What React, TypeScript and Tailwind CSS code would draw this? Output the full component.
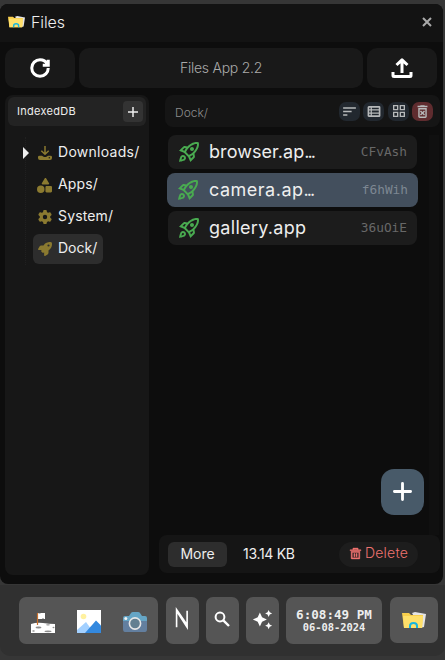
import React from "react";
import { FaShapes, FaRocket, FaGear } from "react-icons/fa6";
import { GrRefresh } from "react-icons/gr";
import { RiDeleteBin5Line } from "react-icons/ri";
import {
  MdAutoAwesome,
  MdOutlineDeleteForever,
  MdOutlineGridView,
  MdOutlineRocketLaunch,
  MdSort,
} from "react-icons/md";

function FolderIcon({ className }: { className: string }) {
  return (
    <svg viewBox="0 0 24 17" preserveAspectRatio="none" className={className}>
      <path d="M10 1l3-1 11 2-2 13-4 1z" fill="#e4e4e4" />
      <path d="M0 1h7l2 2h12l-1 13H2z" fill="#f9cf4c" />
      <path d="M1 4h20l-1 12H2z" fill="#ffe06a" />
      <path d="M8 16v-2c0-4 7-4 7 0v2" fill="none" stroke="#16b5e0" strokeWidth="2" />
    </svg>
  );
}

function UploadIcon() {
  return (
    <svg viewBox="0 0 22 21" className="h-[21px] w-[22px]" fill="none" stroke="#fff" strokeLinejoin="round">
      <path d="M11 15V3M5.500 7 11 1.800 16.500 7" strokeWidth="3" />
      <path d="M2 14v3.500q0 1 1 1h16q1 0 1-1V14" strokeWidth="3" />
    </svg>
  );
}

function DownloadIcon() {
  return (
    <svg viewBox="0 0 14 14" className="h-3.5 w-3.5">
      <path d="M7 0v8M3.300 4.800 7 8.300l3.700-3.500" fill="none" stroke="#8b7a30" strokeWidth="1.500" />
      <path d="M1.500 9.800H4L6 11h2l2-1.200h2.500Q14 9.800 14 11v1q0 2-2 2H2q-2 0-2-2v-1q0-1.200 1.500-1.200z" fill="#8b7a30" />
      <circle cx="11.300" cy="11.800" r="0.700" fill="#171717" />
    </svg>
  );
}

function TableIcon() {
  return (
    <svg viewBox="0 0 14 12" className="h-[11px] w-[14px]" fill="none" stroke="#b7b9ba">
      <rect x="0.900" y="0.900" width="12.200" height="10.200" rx="0.500" strokeWidth="1.800" />
      <path d="M4 1v10M1 4.300h12M1 7.700h12" strokeWidth="1.400" />
    </svg>
  );
}

function SearchIcon() {
  return (
    <svg viewBox="0 0 16 16" className="mr-px mb-1 h-4 w-4" fill="none" stroke="#fff">
      <circle cx="6" cy="6" r="4.400" strokeWidth="2" />
      <path d="M9.300 9.300 15 15" strokeWidth="2.400" />
    </svg>
  );
}

function MoonIcon() {
  return (
    <svg viewBox="0 0 24 20" className="mt-0.5 h-5 w-6">
      <path d="M7 0h7v6H7z" fill="#fff" />
      <path d="M7.500 0.500h2M11 5.500h2" stroke="#aaa" strokeWidth="0.800" />
      <path d="M0 11q6-2 12-1t12 1v9H0z" fill="#fff" />
      <path d="M6.500 0v12" stroke="#c8702c" strokeWidth="1.200" />
      <g fill="#8d8d8d">
        <ellipse cx="7.500" cy="14.500" rx="3" ry="1.100" />
        <ellipse cx="17" cy="18.300" rx="3.500" ry="0.900" />
        <ellipse cx="17" cy="11.800" rx="2" ry="0.600" />
        <ellipse cx="2.500" cy="18" rx="1.300" ry="0.700" />
        <ellipse cx="22.500" cy="14.500" rx="1" ry="0.700" />
      </g>
    </svg>
  );
}

function PictureIcon() {
  return (
    <svg viewBox="0 0 24 23" className="h-[23px] w-6">
      <path d="M0 0h24v23H0z" fill="#fff" />
      <circle cx="6.500" cy="6.500" r="2.800" fill="#fff1a0" />
      <path d="M0 20 9 12l8 11H0z" fill="#a3d0ff" />
      <path d="M8 23 19 10.500l5 5V23z" fill="#3389df" />
    </svg>
  );
}

function CameraIcon() {
  return (
    <svg viewBox="0 0 24 20" className="h-5 w-6">
      <path d="M2 4h4l2-3q.5-1 2-1h5q1.500 0 2 1l2 3h3q2 0 2 2v5H0V6q0-2 2-2z" fill="#65a5c5" />
      <path d="M0 9h24v8q0 3-2 3H2q-2 0-2-3z" fill="#637f9f" />
      <circle cx="12" cy="11.500" r="5.600" fill="#637f91" stroke="#e7e7e7" strokeWidth="1.600" />
      <circle cx="2.800" cy="6.500" r="1.500" fill="#f4f4f4" />
    </svg>
  );
}

const tree = [
  { name: "Downloads/", width: "w-[82px]", track: "tracking-[0.28px]", icon: <DownloadIcon /> },
  { name: "Apps/", width: "w-[41px]", track: "tracking-[0.15px]", icon: <FaShapes size={15} /> },
  { name: "System/", width: "w-14", track: "tracking-[0.15px]", icon: <FaGear size={14} /> },
  { name: "Dock/", width: "w-10", track: "tracking-[0px]", icon: <FaRocket size={14} /> },
];

const files = [
  { name: "browser.ap", cut: true, track: "tracking-[0.07px]", code: "CFvAsh" },
  { name: "camera.ap", cut: true, track: "tracking-[0.5px]", code: "f6hWih" },
  { name: "gallery.app", cut: false, track: "tracking-[0.3px]", code: "36uOiE" },
];

export default function App() {
  return (
    <div className="flex h-[660px] w-[445px] flex-col overflow-hidden bg-[#363636] pt-1 font-['Inter',sans-serif] text-[#eee]">
      <main className="flex h-[580px] w-[443px] shrink-0 flex-col overflow-hidden rounded-[8px] bg-[#0d0d0d]">
        <header className="flex h-[38px] shrink-0 items-center bg-[#131313] pr-[11px] pb-0.5 pl-2">
          <FolderIcon className="mb-px h-3 w-[17px]" />
          <span className="ml-1.5 text-base font-light tracking-[-0.1px] whitespace-nowrap">Files</span>
          <svg viewBox="0 0 10 10" className="mb-px ml-auto h-[10px] w-[10px]" stroke="#aaa" strokeWidth="2">
            <path d="M1 1l8 8M9 1 1 9" />
          </svg>
        </header>

        <div className="mt-1.5 flex h-10 shrink-0 gap-1 pl-[5px]">
          <button className="flex w-[70px] items-center justify-center rounded-[10px] bg-[#191919] text-white">
            <GrRefresh size={22} className="[&_*]:[stroke-width:3.300]" />
          </button>
          <div className="flex w-[284px] items-center justify-center rounded-[10px] bg-[#191919] pb-px text-sm font-light tracking-[-0.25px] text-[#aaa]">
            Files App 2.2
          </div>
          <button className="flex w-[70px] items-center justify-center rounded-[10px] bg-[#191919]">
            <UploadIcon />
          </button>
        </div>

        <div className="mt-[7px] flex h-[480px] shrink-0 pl-[5px]">
          <aside className="h-full w-36 rounded-lg bg-[#171717] px-[3px] pt-0.5">
            <div className="flex h-[29px] items-center justify-between rounded-md bg-[#232323] pr-[3px] pl-[9px]">
              <span className="text-[11px] tracking-[0.3px]">IndexedDB</span>
              <span className="flex h-[21px] w-5 items-center justify-center rounded bg-[#333]">
                <svg viewBox="0 0 10 10" className="h-[10px] w-[10px]" stroke="#eee" strokeWidth="1.500">
                  <path d="M5 0v10M0 5h10" />
                </svg>
              </span>
            </div>
            <div className="mt-[11px] ml-[17px] border-l border-dotted border-[#202020]">
              {tree.map((t, i) => (
                <div key={t.name} className="flex h-8 items-center">
                  <span className="w-[7px]">
                    {i === 0 && (
                      <svg viewBox="0 0 6 12" className="-ml-[3px] h-3 w-1.5" fill="#eee">
                        <path d="M0 0 6 6 0 12z" />
                      </svg>
                    )}
                  </span>
                  <div className={`flex h-[30px] items-center rounded-md pr-[5px] pl-1 ${i === 3 ? "bg-[#2d2d2d]" : ""}`}>
                    <span className="flex w-[15px] justify-center text-[#8b7a30]">{t.icon}</span>
                    <span className={`ml-[6px] pb-0.5 text-sm whitespace-nowrap ${t.width} ${t.track}`}>{t.name}</span>
                  </div>
                </div>
              ))}
            </div>
          </aside>

          <section className="ml-[10px] flex h-full w-[281px] flex-col">
            <div className="ml-1.5 flex h-8 shrink-0 items-center gap-[3px] rounded-lg bg-[#151515] pr-[7px] pl-[10px]">
              <span className="mt-1 mr-auto text-xs font-light tracking-[0px] text-[#8c8c8c]">Dock/</span>
              <span className="flex h-[19px] w-[21px] items-center justify-center rounded-[7px] bg-[#22282f] text-[#b7b9ba]"><MdSort size={17} /></span>
              <span className="flex h-[19px] w-[21px] items-center justify-center rounded-[7px] bg-[#22282f]"><TableIcon /></span>
              <span className="ml-px flex h-[19px] w-[21px] items-center justify-center rounded-[7px] bg-[#22282f] text-[#b7b9ba]"><MdOutlineGridView size={16} /></span>
              <span className="flex h-[19px] w-[21px] items-center justify-center rounded-[7px] bg-[#5f2c2f] text-[#b7b9ba]"><MdOutlineDeleteForever size={17} /></span>
            </div>
            <div className="relative mt-2 flex h-[400px] shrink-0 justify-between">
              <div className="flex flex-col gap-1 pl-[9px]">
                {files.map((f, i) => (
                  <div
                    key={f.name}
                    className={`flex h-[34px] items-center rounded-lg pr-[10px] ${
                      i === 1 ? "-mx-px w-[251px] bg-[#434f5d] pl-[9px]" : "w-[249px] bg-[#1c1c1c] pl-[9px]"
                    }`}
                  >
                    <MdOutlineRocketLaunch size={24} className="text-[#49aa50]" />
                    <span className={`pb-px text-lg whitespace-nowrap ${i === 1 ? "ml-[9px]" : "ml-2"} ${f.track}`}>
                      {f.name}
                      {f.cut && <span className="tracking-[-2px]">...</span>}
                    </span>
                    <span className={`ml-auto font-['DejaVu_Sans_Mono',monospace] text-[12.800px] ${i === 1 ? "text-[#7d8792]" : "text-[#686868]"}`}>
                      {f.code}
                    </span>
                  </div>
                ))}
              </div>
              <div className="mr-[1px] h-full w-[10px] bg-[#101010]" />
              <button className="absolute top-[334px] right-4 flex h-[46px] w-[43px] items-center justify-center rounded-[13px] bg-[#485a69]">
                <svg viewBox="0 0 20 20" className="mb-0.5 h-[19px] w-[19px]" stroke="#fff" strokeWidth="3" strokeLinecap="round">
                  <path d="M10 1.500v17M1.500 10h17" />
                </svg>
              </button>
            </div>
            <footer className="flex h-[38px] shrink-0 items-center rounded-lg bg-[#151515] pr-[22px] pl-[9px]">
              <button className="h-[25px] w-[59px] rounded-md bg-[#2d2d2d] text-sm tracking-[0px]">More</button>
              <span className="ml-4 pb-px text-sm tracking-[-0.3px] whitespace-nowrap">13.14 KB</span>
              <button className="ml-auto flex h-[25px] w-[79px] items-center justify-center gap-[3px] rounded-full bg-[#1d1d1d] pb-0.5 text-sm font-light tracking-[0.2px] text-[#ef7370]">
                <RiDeleteBin5Line size={13} className="[&>path]:[stroke-width:0.800]" stroke="#ef7370" />
                Delete
              </button>
            </footer>
          </section>
        </div>
      </main>

      <nav className="mt-px flex h-[71px] shrink-0 items-start rounded-b-[10px] bg-[#303030] pt-3 pl-[19px]">
        <div className="flex h-[47px] w-[139px] items-center justify-between rounded-[7px] bg-[#555] pt-0.5 pr-[11px] pl-3">
          <MoonIcon />
          <PictureIcon />
          <CameraIcon />
        </div>
        <div className="ml-2 flex h-[47px] w-[33px] items-center justify-center rounded-[7px] bg-[#555]">
          <svg viewBox="0 0 14 24" className="mr-px mb-1 h-[23px] w-[14px]" fill="#fff">
            <path d="M0.500 0 11.500 16V4h1.700v20L2.200 7v14H0.500z" />
          </svg>
        </div>
        <div className="ml-[7px] flex h-[47px] w-[33px] items-center justify-center rounded-[7px] bg-[#555] text-white">
          <SearchIcon />
        </div>
        <div className="ml-[7px] flex h-[47px] w-[33px] items-center justify-center rounded-[7px] bg-[#555] text-white">
          <MdAutoAwesome size={21} className="mb-0.5" />
        </div>
        <div className="ml-[7px] flex h-[47px] w-24 flex-col items-center justify-center rounded-[7px] bg-[#555] font-['DejaVu_Sans_Mono',monospace] font-bold">
          <span className="text-[12.600px] leading-[14px] whitespace-nowrap">6:08:49 PM</span>
          <span className="text-[10.400px] leading-[11px] whitespace-nowrap">06-08-2024</span>
        </div>
        <div className="ml-2 flex h-[46px] w-12 items-center justify-center rounded-[7px] bg-[#555]">
          <FolderIcon className="h-[17px] w-6" />
        </div>
      </nav>
    </div>
  );
}
